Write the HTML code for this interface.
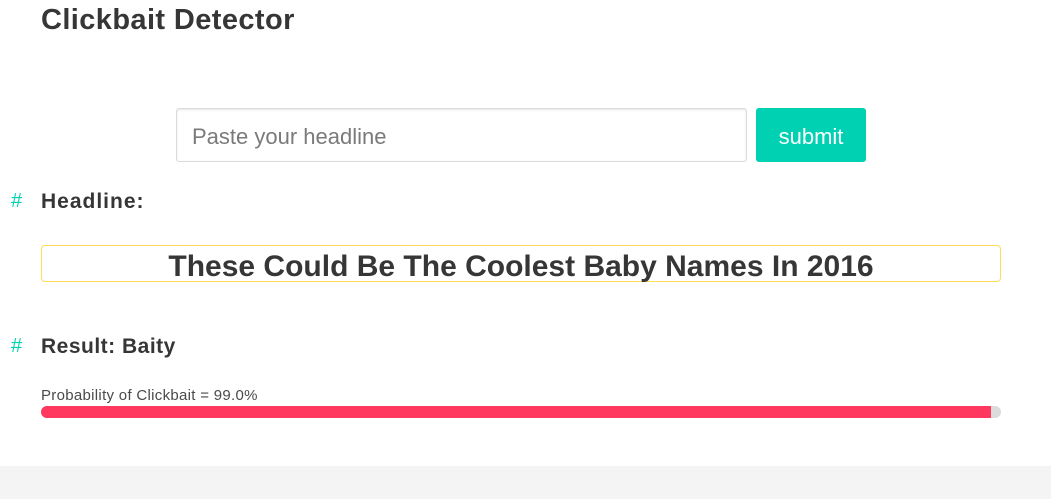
<!DOCTYPE html>
<html><head><style>
body{margin:0;width:1051px;height:499px;background:#fff;font-family:"Liberation Sans",sans-serif;color:#363636;position:relative;overflow:hidden}
.a{position:absolute}
h1{position:absolute;left:41px;top:4px;margin:0;font-size:29px;font-weight:600;color:#363636;letter-spacing:0.4px}
.inp{left:176px;top:108px;border:1px solid #dbdbdb;border-radius:3px;box-shadow:inset 0 1px 2px rgba(10,10,10,.1);font-size:22px;color:#7a7a7a;line-height:56px;padding-left:15px;box-sizing:border-box;width:571px;height:54px}
.btn{left:756px;top:108px;width:110px;height:54px;background:#00d1b2;color:#fff;border-radius:3px;font-size:22px;text-align:center;line-height:57px}
.h{left:41px;font-size:21px;font-weight:600;letter-spacing:0.5px}
.hash{left:11px;font-size:20px;color:#00d1b2}
.box{left:41px;top:245px;width:958px;height:35px;border:1px solid #ffdd57;border-radius:4px;text-align:center;font-size:30px;font-weight:600;line-height:42px}
.bar{left:41px;top:406px;width:960px;height:12px;background:#dbdbdb;border-radius:6px;overflow:hidden}
.bar div{width:950px;height:12px;background:#ff3860}
.foot{left:0;top:466px;width:1051px;height:33px;background:#f4f4f4}
</style></head><body>
<h1>Clickbait Detector</h1>
<div class="a inp">Paste your headline</div>
<div class="a btn">submit</div>
<div class="a hash" style="top:190px">#</div>
<div class="a h" style="top:190px;letter-spacing:1px">Headline:</div>
<div class="a box">These Could Be The Coolest Baby Names In 2016</div>
<div class="a hash" style="top:335px">#</div>
<div class="a h" style="top:335px">Result: Baity</div>
<div class="a" style="left:41px;top:387px;font-size:15px;color:#4a4a4a;letter-spacing:0.3px">Probability of Clickbait = 99.0%</div>
<div class="a bar"><div></div></div>
<div class="a foot"></div>
</body></html>
